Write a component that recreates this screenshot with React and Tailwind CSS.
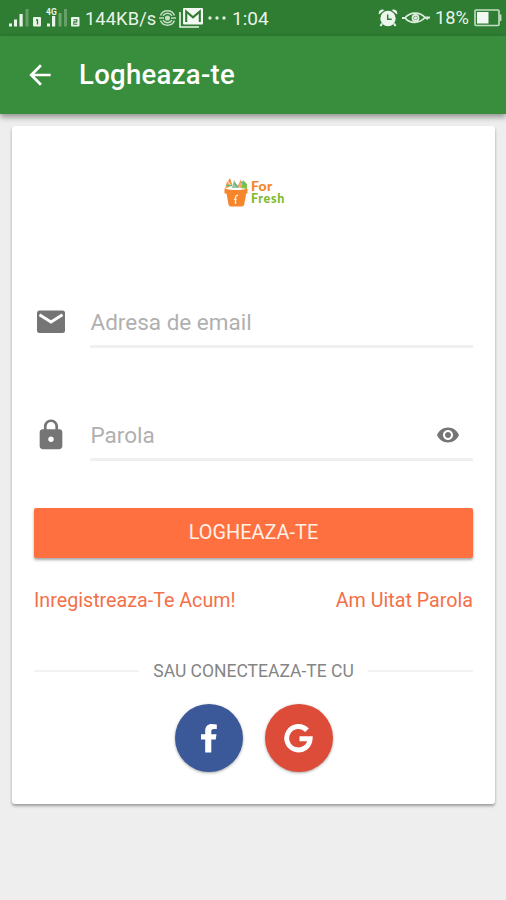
import React from 'react'
import { MdArrowBack, MdLock, MdVisibility } from 'react-icons/md'

const SignalOne = () => (
  <svg className="ml-2 h-5 w-[34px] shrink-0" viewBox="0 0 34 20" fill="#e9f3e9">
    <rect x="1" y="15.5" width="3" height="3" />
    <rect x="6" y="11.5" width="3" height="7" />
    <rect x="11.5" y="6" width="3.2" height="12.5" />
    <rect x="17.5" y="1" width="3" height="17.5" opacity=".3" />
    <rect x="25" y="9" width="8" height="9.5" rx="1" />
    <path d="M28 12h1.5v4.5" fill="none" stroke="#2e7d32" strokeWidth="1.3" />
  </svg>
)

const SignalTwo = () => (
  <svg className="ml-1 h-5 w-[36px] shrink-0" viewBox="0 0 36 20" fill="#e9f3e9">
    <text x="0" y="7" fontSize="8.500" fontWeight="700" fontFamily="Roboto, sans-serif">4G</text>
    <rect x="1" y="15.5" width="3" height="3" />
    <rect x="6" y="8" width="3.2" height="10.5" />
    <rect x="12.5" y="5" width="3" height="13.5" opacity=".35" />
    <rect x="18" y="1" width="3" height="17.5" opacity=".3" />
    <rect x="25" y="9" width="8.5" height="9.5" rx="1" />
    <path d="M27.5 11.8h3.3v2.1h-3v2.4h3.5" fill="none" stroke="#2e7d32" strokeWidth="1.1" />
  </svg>
)

const Hotspot = () => (
  <svg className="ml-[3px] h-[18px] w-[17px] shrink-0" viewBox="0 0 17 18" fill="none" stroke="#c4dfc5" strokeWidth="1.5">
    <path d="M1.500 6.500C4 .2 13 .2 15.500 6.500M4 6.800c2-3.300 7-3.300 9 0M1.500 11.500c2.500 6.300 11.500 6.300 14 0M4 11.200c2 3.300 7 3.300 9 0M0 9h5M12 9h5" />
    <circle cx="8.500" cy="9" r="1.800" fill="#c4dfc5" />
  </svg>
)

const Gmail = () => (
  <svg className="ml-[3px] h-[22px] w-6 shrink-0" viewBox="0 0 24 22">
    <path d="M1 5v15h19" fill="none" stroke="#e9f3e9" strokeWidth="1.600" />
    <rect x="4" y="1" width="20" height="16.500" rx="1" fill="#f3f8f3" />
    <path d="M7.200 15V4.500l6.800 5.800 6.800-5.800V15" fill="none" stroke="#2e7d32" strokeWidth="2.100" />
  </svg>
)

const Alarm = () => (
  <svg className="h-5 w-5 shrink-0" viewBox="0 0 20 20" fill="#edf6ed">
    <circle cx="10" cy="10.500" r="7.700" />
    <path d="M1 6.500C-.2 2.500 3.500.2 6.500 2zM19 6.500C20.200 2.500 16.500.2 13.500 2z" />
    <path d="M4 15.500 2.500 18M16 15.500l1.500 2.500" stroke="#edf6ed" strokeWidth="2" />
    <path d="M9.700 6.500v4.700h4" fill="none" stroke="#2e7d32" strokeWidth="1.500" />
  </svg>
)

const EyeMode = () => (
  <svg className="ml-1 h-[14px] w-7 shrink-0" viewBox="0 0 28 14" fill="none" stroke="#dceddc" strokeWidth="1.800">
    <path d="M0 7h3C8 .5 18 .5 23 6.500h5M3 7c5 6 14 6 20-.5l3 1.800" />
    <circle cx="13.500" cy="7" r="3" />
    <circle cx="13.500" cy="7" r=".8" />
  </svg>
)

const Battery = () => (
  <svg className="ml-[5px] h-[18px] w-7 shrink-0" viewBox="0 0 28 18">
    <rect x="1" y="1" width="24" height="15.500" rx="1" fill="none" stroke="#c4dfc5" strokeWidth="1.600" />
    <rect x="3" y="3" width="11.500" height="11.500" fill="#f3f8f3" />
    <path d="M26.500 5.500v6.500" stroke="#c4dfc5" strokeWidth="1.800" />
  </svg>
)

const StatusBar = () => (
  <div className="flex h-9 items-center bg-[#2e7d32] text-[18px] text-[#e9f3e9]">
    <SignalOne />
    <SignalTwo />
    <span className="ml-[3px] mt-px w-[71px] whitespace-nowrap text-[18.300px] tracking-[0.1px]">144KB/s</span>
    <Hotspot />
    <Gmail />
    <svg className="ml-1 h-1 w-5 shrink-0" viewBox="0 0 20 4" fill="#dceddc">
      <circle cx="3" cy="2" r="1.700" />
      <circle cx="10" cy="2" r="1.700" />
      <circle cx="17" cy="2" r="1.700" />
    </svg>
    <span className="ml-[5px] mt-[3px] text-[19px]">1:04</span>
    <div className="ml-auto flex items-center pr-1">
      <Alarm />
      <EyeMode />
      <span className="ml-[5px] text-[18.300px]">18%</span>
      <Battery />
    </div>
  </div>
)

const Logo = () => (
  <div className="flex h-8 pl-[190px]">
    <svg className="h-8 w-6 shrink-0" viewBox="0 0 24 32">
      <path d="M1 12 3 4l4 5z" fill="#f7a55a" />
      <path d="m4 4 2-3 3 9z" fill="#f58b3c" />
      <path d="m8 11 2-8 5 8z" fill="#8fc9a4" />
      <path d="m13 10 4-8 1 9z" fill="#f2a679" />
      <path d="m17 11 2-8 4 4v5z" fill="#82c341" />
      <path d="M2 8.500h6M10 6l4 4M17 5l5 3" stroke="#65b878" strokeWidth="1.500" />
      <path d="M.5 11.500c7 2 16 2 23 0v5h-1.300l-2 11q-.3 2-2.500 2H7q-2.200 0-2.500-2l-2-11H.5z" fill="#f6862c" />
      <path d="M14 18.500q-2.500-.5-2.500 2V27M10 22.300h2.500" fill="none" stroke="#fff0df" strokeWidth="1.300" />
    </svg>
    <div className="ml-[3px] flex flex-col gap-px font-['Lato',sans-serif] font-black">
      <div className="mt-[3px] h-3 text-[14px] leading-3 tracking-[0.300px] text-[#f6862c]">For</div>
      <div className="h-3 text-[12.500px] leading-3 tracking-[0.700px] text-[#7dbb2c]">Fresh</div>
    </div>
  </div>
)

const App = () => {
  return (
    <div className="flex min-h-screen flex-col bg-[#eeeeee] font-['Roboto',sans-serif]">
      <StatusBar />
      <header className="z-10 flex h-[78px] items-center bg-[#388e3c] text-white shadow-[0_3px_6px_rgba(0,0,0,0.4)]">
        <MdArrowBack className="ml-6 h-8 w-8" />
        <h1 className="ml-[23px] text-[27.500px] font-medium tracking-[0.300px]">Logheaza-te</h1>
      </header>

      <main className="ml-3 mr-[11px] mt-3 h-[678px] rounded-[3px] bg-white px-[22px] pt-[51px] shadow-[0_2px_3px_rgba(0,0,0,0.35)]">
        <Logo />

        <div className="mt-[89px] flex h-[50px]">
          <svg className="mt-[7px] h-[34px] w-[34px] text-[#757575]" viewBox="0 0 34 34">
            <rect x="3" y="5.500" width="28" height="22.500" rx="2.500" fill="currentColor" />
            <path d="m5.500 9.800 11.500 7.200 11.500-7.200" fill="none" stroke="white" strokeWidth="2.800" />
          </svg>
          <div className="ml-[22px] flex flex-1 items-center border-b-[3px] border-[#f0f0f0] pt-[2px] pl-[0.500px]">
            <span className="text-[22.500px] text-[#b0b0b0]">Adresa de email</span>
          </div>
        </div>

        <div className="mt-[63px] flex h-[50px]">
          <MdLock className="mt-[7px] h-[34px] w-[34px] text-[#757575]" />
          <div className="ml-[22px] flex flex-1 items-center justify-between border-b-[3px] border-[#f0f0f0] pl-[0.500px]">
            <span className="pt-[2px] text-[22.500px] text-[#b0b0b0]">Parola</span>
            <MdVisibility className="mr-[13px] h-6 w-6 text-[#757575]" />
          </div>
        </div>

        <button className="mt-[47px] block h-[50px] w-full rounded-[2px] bg-[#ff7040] text-[19.900px] text-[#fff0e8] shadow-[0_2px_3px_rgba(0,0,0,0.35)]">
          LOGHEAZA-TE
        </button>

        <div className="mt-7 flex h-[30px] items-center justify-between text-[19.700px] text-[#f47048]">
          <a href="#">Inregistreaza-Te Acum!</a>
          <a href="#">Am Uitat Parola</a>
        </div>

        <div className="mt-10 flex h-[30px] items-center">
          <div className="h-[2px] flex-1 bg-[#f2f2f2]" />
          <span className="mx-[14px] text-[17.500px] text-[#858585]">SAU CONECTEAZA-TE CU</span>
          <div className="h-[2px] flex-1 bg-[#f2f2f2]" />
        </div>

        <div className="mt-[18px] flex justify-center gap-[22px]">
          <button className="flex h-[68px] w-[68px] items-center justify-center rounded-full bg-[#3b5998] shadow-[0_1px_3px_rgba(0,0,0,0.35)]">
            <svg className="h-[30px] w-[18px]" viewBox="0 0 18 30" fill="white">
              <path d="M5.200 29.500V16.500H1V11.300h4.200V8C5.200 3.500 7.800 1 11.800 1q2.600 0 5 .4v4.500h-2.800c-2.200 0-2.700 1.100-2.700 2.600v2.800h5.200l-.8 5.200h-4.400v13z" />
            </svg>
          </button>
          <button className="flex h-[68px] w-[68px] items-center justify-center rounded-full bg-[#dd4b39] shadow-[0_1px_3px_rgba(0,0,0,0.35)]">
            <svg className="h-[30px] w-[30px]" viewBox="0 0 30 30" fill="none" stroke="white" strokeWidth="5">
              <path d="M23 7.300A11.700 11.700 0 1 0 26.100 15.800H15.500" />
            </svg>
          </button>
        </div>
      </main>
    </div>
  )
}

export default App
